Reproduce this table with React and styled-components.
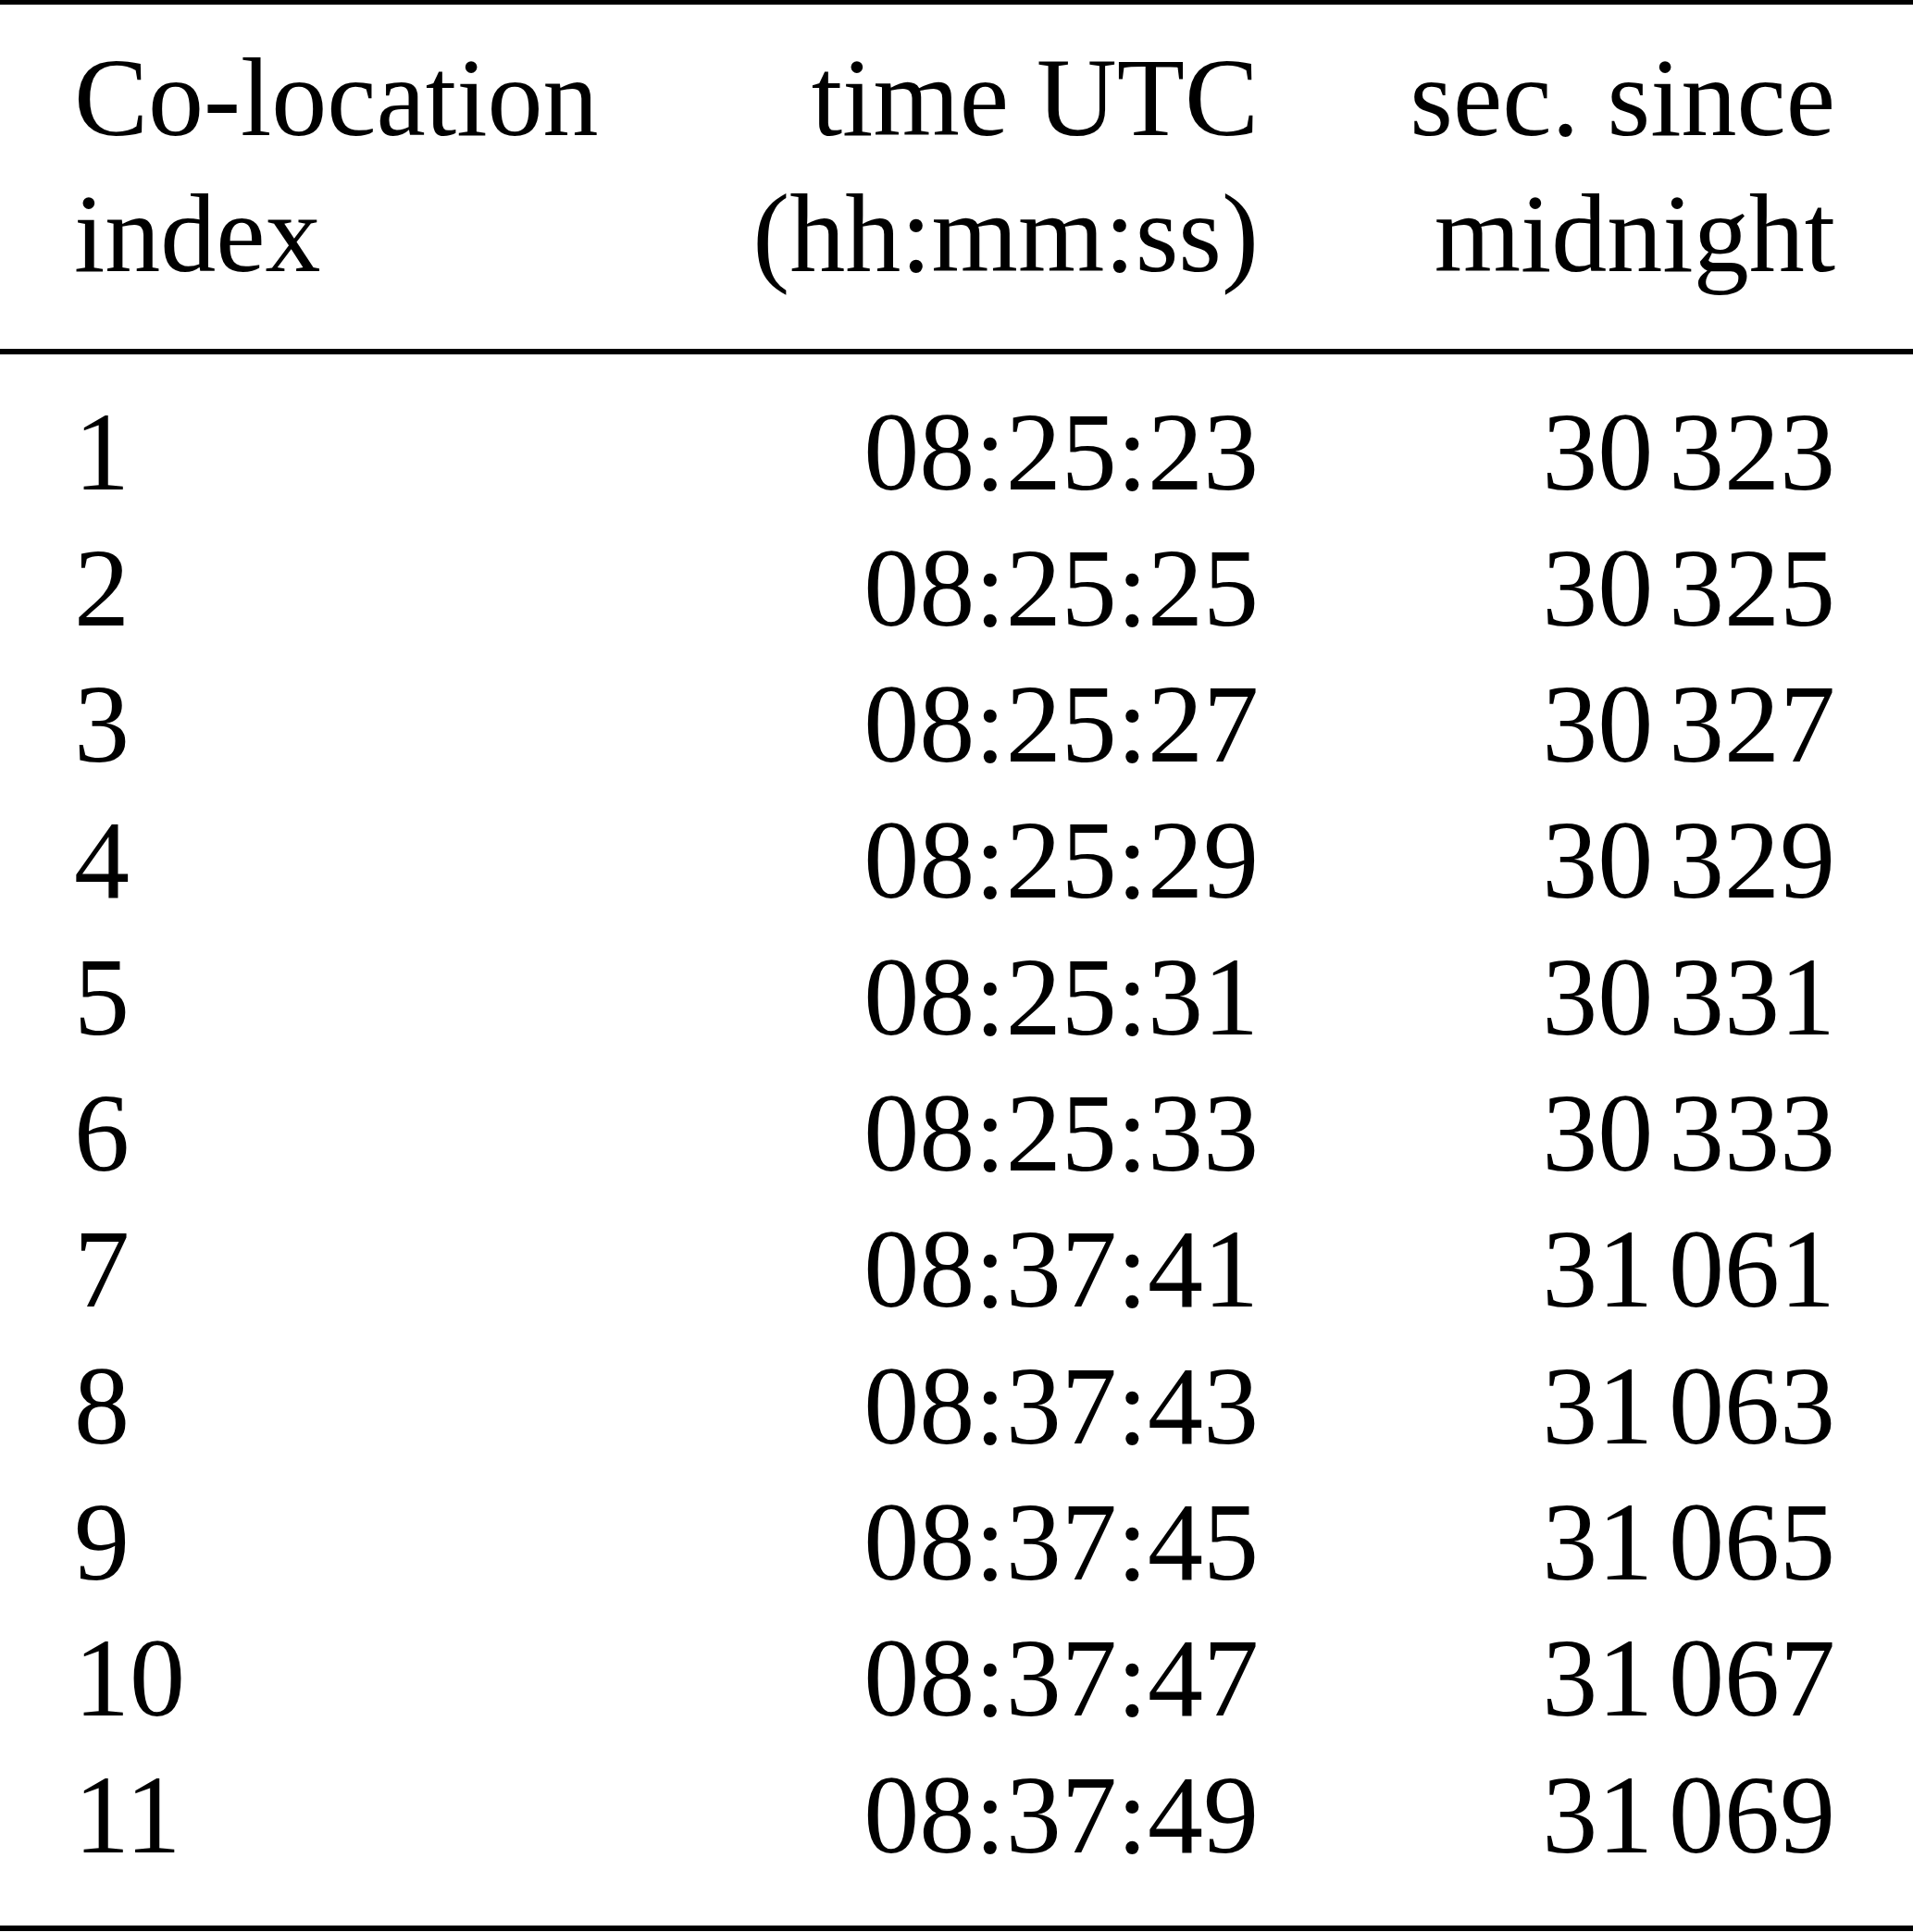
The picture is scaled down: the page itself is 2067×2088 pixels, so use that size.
import React from 'react';
import styled, { createGlobalStyle } from 'styled-components';

const GlobalStyle = createGlobalStyle`
	html,
	body {
		margin: 0;
		padding: 0;
		background: #fff;
	}

	body {
		width: 2067px;
		font-family: 'Liberation Serif', 'Times New Roman', serif;
		color: #000;
	}
`;

const rows = [
	['1', '08:25:23', '30', '323'],
	['2', '08:25:25', '30', '325'],
	['3', '08:25:27', '30', '327'],
	['4', '08:25:29', '30', '329'],
	['5', '08:25:31', '30', '331'],
	['6', '08:25:33', '30', '333'],
	['7', '08:37:41', '31', '061'],
	['8', '08:37:43', '31', '063'],
	['9', '08:37:45', '31', '065'],
	['10', '08:37:47', '31', '067'],
	['11', '08:37:49', '31', '069'],
];

const Table = styled.div`
	width: 2067px;
	font-size: 120px;
	line-height: 147.3px;
`;

const Rule = styled.div`
	height: ${(props) => props.thickness}px;
	background: #000;
`;

// same column template for header and body so the columns line up
const Grid = styled.div`
	display: grid;
	grid-template-columns: minmax(0, 1fr) 560px 460px;
	column-gap: 163px;
	padding: ${(props) => props.padTop}px 84px ${(props) => props.padBottom}px 80px;
`;

const Cell = styled.div`
	text-align: ${(props) => (props.right ? 'right' : 'left')};
	white-space: nowrap;
`;

const Thin = styled.span`
	display: inline-block;
	width: 0.14em;
`;

function App() {
	return (
		<>
			<GlobalStyle />
			<Table>
				<Rule thickness={5} />
				<Grid padTop={27} padBottom={50}>
					<Cell>
						Co-location
						<br />
						index
					</Cell>
					<Cell right>
						time UTC
						<br />
						(hh:mm:ss)
					</Cell>
					<Cell right>
						sec. since
						<br />
						midnight
					</Cell>
				</Grid>
				<Rule thickness={6} />
				<Grid padTop={32} padBottom={46}>
					{rows.map(([idx, time, hi, lo]) => (
						<React.Fragment key={idx}>
							<Cell>{idx}</Cell>
							<Cell right>{time}</Cell>
							<Cell right>
								{hi}
								<Thin>{'\u2009'}</Thin>
								{lo}
							</Cell>
						</React.Fragment>
					))}
				</Grid>
				<Rule thickness={6} />
			</Table>
		</>
	);
}

export default App;
